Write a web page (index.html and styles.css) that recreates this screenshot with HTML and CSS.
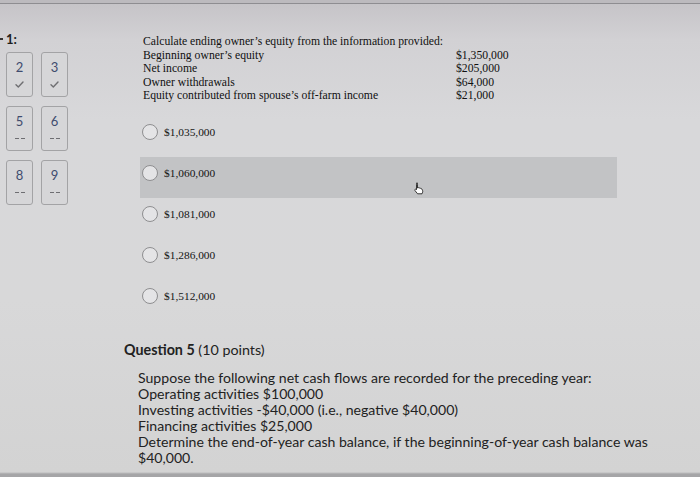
FILE: index.html
```html
<!DOCTYPE html>
<html>
<head>
<meta charset="utf-8">
<link rel="stylesheet" href="styles.css">
</head>
<body>
<div class="quiz">
  <nav class="nav">
    <div class="nav-title"><span class="dash"></span>1:</div>
    <div class="tiles">
      <div class="tile"><span class="num">2</span><svg class="check" width="9" height="7" viewBox="0 0 9 7"><path d="M1 3.8l2.3 2.2L8 1" fill="none" stroke="#6f6f72" stroke-width="1.4" stroke-linecap="round" stroke-linejoin="round"/></svg></div>
      <div class="tile"><span class="num">3</span><svg class="check" width="9" height="7" viewBox="0 0 9 7"><path d="M1 3.8l2.3 2.2L8 1" fill="none" stroke="#6f6f72" stroke-width="1.4" stroke-linecap="round" stroke-linejoin="round"/></svg></div>
      <div class="tile"><span class="num">5</span><span class="dashes"><i></i><i></i></span></div>
      <div class="tile"><span class="num">6</span><span class="dashes"><i></i><i></i></span></div>
      <div class="tile"><span class="num">8</span><span class="dashes"><i></i><i></i></span></div>
      <div class="tile"><span class="num">9</span><span class="dashes"><i></i><i></i></span></div>
    </div>
  </nav>
  <main class="content">
    <div class="prompt">
      <div class="full">Calculate ending owner’s equity from the information provided:</div>
      <div>Beginning owner’s equity</div><div class="val">$1,350,000</div>
      <div>Net income</div><div class="val">$205,000</div>
      <div>Owner withdrawals</div><div class="val">$64,000</div>
      <div>Equity contributed from spouse’s off-farm income</div><div class="val">$21,000</div>
    </div>
    <div class="options">
      <div class="opt"><span class="radio"></span><span>$1,035,000</span></div>
      <div class="opt hover"><span class="radio"></span><span>$1,060,000</span>
        <svg class="cursor" width="11" height="13" viewBox="0 0 11 13"><path d="M3.5 1.2c.6 0 1 .4 1 1V6l.3-.2c.5-.3 1.1-.1 1.3.3.4-.3 1-.2 1.3.2.4-.2 1-.1 1.2.4l.9 1.6c.3.6.3 1.3.1 1.9L9 11.8H4.6L2 8.6c-.4-.4-.3-1 .1-1.3.4-.3.9-.2 1.2.1l.2.3V2.2c0-.6.4-1 1-1z" fill="#fff" stroke="#222" stroke-width="0.9" stroke-linejoin="round"/></svg>
      </div>
      <div class="opt"><span class="radio"></span><span>$1,081,000</span></div>
      <div class="opt"><span class="radio"></span><span>$1,286,000</span></div>
      <div class="opt"><span class="radio"></span><span>$1,512,000</span></div>
    </div>
  </main>
</div>
<section class="q5">
  <h2 class="q5-title"><b>Question 5</b> (10 points)</h2>
  <div class="q5-body">
    <p>Suppose the following net cash flows are recorded for the preceding year:</p>
    <p>Operating activities $100,000</p>
    <p>Investing activities -$40,000 (i.e., negative $40,000)</p>
    <p>Financing activities $25,000</p>
    <p>Determine the end-of-year cash balance, if the beginning-of-year cash balance was $40,000.</p>
  </div>
</section>
</body>
</html>
```
FILE: styles.css
```css
html {
  height: 477px;
  overflow: hidden;
  background: linear-gradient(to bottom,
    #bcbabe 0, #bcbabe 3px, #8e8d91 3px, #8e8d91 4px,
    #c6c4c8 4px, #d2d1d4 40px, #d8d8da 120px, #d8d8d9 300px,
    #d3d3d3 472px, #a5a5a7 474px, #a5a5a7 477px);
}
body {
  margin: 0;
  padding-top: 4px;
  color: #222;
}
.quiz {
  display: flex;
}
.nav {
  width: 140px;
  padding-top: 27px;
  font-family: Lato, "Liberation Sans", sans-serif;
}
.nav-title {
  display: flex;
  align-items: center;
  gap: 3px;
  font-weight: bold;
  font-size: 13px;
  line-height: 16px;
  color: #1e1e1e;
}
.dash {
  width: 3px;
  height: 2px;
  background: #333;
}
.tiles {
  margin: 5px 0 0 6px;
  display: grid;
  grid-template-columns: 27px 27px;
  grid-auto-rows: 45px;
  gap: 9px 8px;
}
.tile {
  box-sizing: border-box;
  border: 1px solid #a3a3a5;
  border-radius: 3px;
  background: #d6d6d8;
  display: flex;
  flex-direction: column;
  align-items: center;
  padding-top: 6px;
}
.num {
  font-size: 13px;
  line-height: 16px;
  color: #3f4c6e;
}
.check {
  margin-top: 6px;
}
.dashes {
  margin-top: 9px;
  display: flex;
  gap: 2px;
}
.dashes i {
  width: 4px;
  height: 1px;
  background: #6e6e72;
}
.content {
  flex: 1;
  padding-top: 31px;
}
.prompt {
  margin-left: 3px;
  display: grid;
  grid-template-columns: 313px auto;
  font-family: "Liberation Serif", serif;
  font-size: 11.7px;
  line-height: 13.5px;
  color: #111;
}
.prompt .full {
  grid-column: 1 / -1;
}
.options {
  margin-top: 13px;
  width: 477px;
}
.opt {
  position: relative;
  box-sizing: border-box;
  height: 41px;
  padding: 8px 0 0 2px;
  display: flex;
  align-items: flex-start;
  gap: 6px;
  font-family: "Liberation Serif", serif;
  font-size: 11.4px;
  line-height: 16px;
  color: #151515;
}
.opt.hover {
  background: #c2c3c5;
}
.radio {
  box-sizing: border-box;
  width: 16px;
  height: 16px;
  border-radius: 50%;
  border: 1px solid #8e8e90;
  background: #e4e4e6;
}
.cursor {
  position: absolute;
  left: 273px;
  top: 25px;
}
.q5 {
  margin: 20px 0 0 124px;
  font-family: Lato, "Liberation Sans", sans-serif;
  color: #222;
}
.q5-title {
  margin: 0;
  font-size: 14.3px;
  font-weight: normal;
  line-height: 18px;
}
.q5-title b {
  font-weight: bold;
}
.q5-body {
  margin: 11px 0 0 14px;
  width: 520px;
  font-size: 14.1px;
  line-height: 16px;
}
.q5-body p {
  margin: 0;
}
```
